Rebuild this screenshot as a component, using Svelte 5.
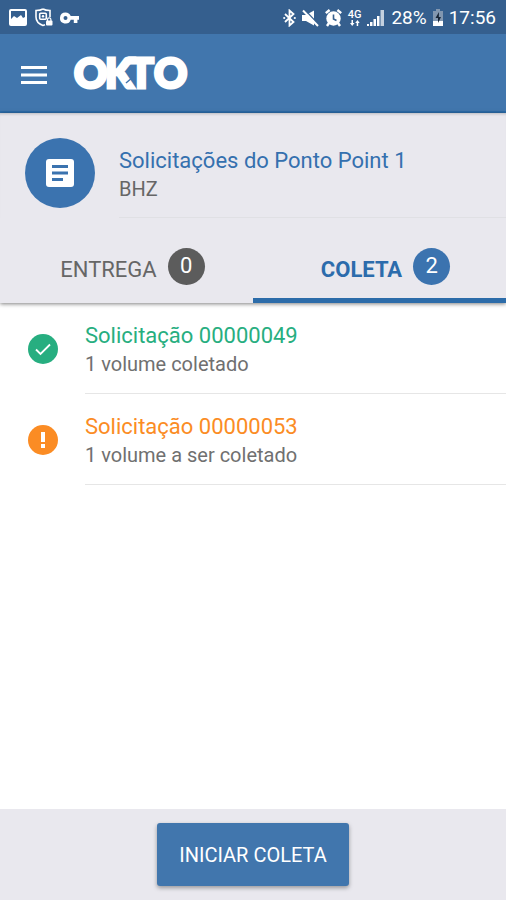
<script>
  let active = $state('coleta');

  const tabs = [
    { id: 'entrega', label: 'ENTREGA', count: 0 },
    { id: 'coleta', label: 'COLETA', count: 2 }
  ];

  const requests = [
    { title: 'Solicitação 00000049', detail: '1 volume coletado', status: 'done' },
    { title: 'Solicitação 00000053', detail: '1 volume a ser coletado', status: 'pending' }
  ];
</script>

<div class="screen">
  <div class="status">
    <div class="group left">
      <svg width="18" height="17" viewBox="0 0 18 17" aria-hidden="true">
        <path fill="#fff" fill-rule="evenodd" d="M2 0h14a2 2 0 0 1 2 2v13a2 2 0 0 1-2 2H2a2 2 0 0 1-2-2V2a2 2 0 0 1 2-2zM2 2v8l3-3 3 2 4-3 2 3 2-1V2z" />
      </svg>
      <svg width="19" height="19" viewBox="0 0 19 19" aria-hidden="true">
        <path fill="none" stroke="#fff" stroke-width="1.6" d="M9 1c2 1.200 4.500 1.500 7 1.500V9M9 1C7 2.200 4.500 2.500 2 2.500V9c0 4 3 7 7 8.500l2-.8" />
        <rect x="5.700" y="5.200" width="6.600" height="6" rx="1" fill="none" stroke="#fff" stroke-width="1.600" />
        <circle cx="9" cy="8.200" r="1.200" fill="#fff" />
        <rect x="12" y="12.500" width="6.500" height="5" rx="1" fill="#fff" />
        <path fill="none" stroke="#fff" stroke-width="1.200" d="M13.500 13v-1.500a1.700 1.700 0 0 1 3.400 0V13" />
      </svg>
      <svg width="19" height="12" viewBox="0 0 19 12" aria-hidden="true">
        <path fill="#fff" fill-rule="evenodd" d="M5.500.5a5.500 5.500 0 0 1 5.200 3.600H19v3.600h-1.600V11h-3.600V7.700h-3.100A5.500 5.500 0 1 1 5.500.5zm0 3.500a2 2 0 1 0 0 4 2 2 0 0 0 0-4z" />
      </svg>
    </div>
    <div class="group right">
      <svg width="13" height="18" viewBox="0 0 13 18" aria-hidden="true">
        <path fill="none" stroke="#fff" stroke-width="1.800" d="M2 5l8.500 8-4 3.500v-15l4 3.500L2 13" />
        <circle cx="1.200" cy="9" r="1.100" fill="#fff" /><circle cx="11.800" cy="9" r="1.100" fill="#fff" />
      </svg>
      <svg width="17" height="18" viewBox="0 0 17 18" aria-hidden="true">
        <path fill="#fff" d="M0 6h4l8-4.500v15L4 12H0z" />
        <path stroke="#355f8e" stroke-width="1.500" d="M2.500.5l14 15" />
        <path stroke="#fff" stroke-width="2" d="M1 1.500l15 15.500" />
      </svg>
      <svg width="17" height="18" viewBox="0 0 17 18" aria-hidden="true">
        <circle cx="8.500" cy="9.500" r="7.200" fill="#fff" />
        <path stroke="#fff" stroke-width="2.400" d="M.8 4.200L4.600 1M16.200 4.200L12.400 1M4 14l-2 3M13 14l2 3" />
        <path fill="none" stroke="#355f8e" stroke-width="1.600" d="M8.500 5.500V10l3 1.500" />
      </svg>
      <div class="net">
        <span>4G</span>
        <svg width="10" height="6" viewBox="0 0 10 6" aria-hidden="true">
          <path fill="#fff" d="M0 3h1.500V0h1.500v3h1.500L2.200 6zM5.200 3h1.500v3h1.500V3h1.500L7.500 0z" />
        </svg>
      </div>
      <svg width="18" height="18" viewBox="0 0 18 18" aria-hidden="true">
        <path fill="#fff" d="M0 15h2v2H0zM3 13h2.500v4H3zM6.500 10h2.500v7H6.500zM10 7h2.500v10H10z" />
        <path fill="#c3d0df" d="M13.500 1H17v16h-3.500z" />
      </svg>
      <span>28%</span>
      <svg width="10" height="18" viewBox="0 0 10 18" aria-hidden="true">
        <path fill="#8297b0" d="M3 0h4v2h3v10H0V2h3z" />
        <path fill="#fff" d="M0 12h10v5H0z" />
        <path fill="#172536" d="M6 3L2.500 9H5v5l3-6H5.800z" />
      </svg>
      <span>17:56</span>
    </div>
  </div>

  <header>
    <button class="menu" aria-label="Menu">
      <svg width="26" height="18" viewBox="0 0 26 18" aria-hidden="true">
        <path fill="#fff" d="M0 0h26v3H0zM0 7.500h26v3H0zM0 15h26v3H0z" />
      </svg>
    </button>
    <svg class="logo" width="116" height="60" viewBox="0 0 116 60" role="img" aria-label="OKTO">
      <text x="1 32 56 81" y="43">OKTO</text>
      <path stroke="#4176ad" stroke-width="1.500" d="M53 38l7-6" />
    </svg>
  </header>

  <section class="panel">
    <div class="place">
      <span class="avatar">
        <svg width="28" height="28" viewBox="0 0 28 28" aria-hidden="true">
          <rect width="28" height="28" rx="3" fill="#fff" />
          <path fill="#3b73af" d="M6 6h16v3H6zM6 12.500h16v3H6zM6 19h11v3H6z" />
        </svg>
      </span>
      <div class="info">
        <h1>Solicitações do Ponto Point 1</h1>
        <p>BHZ</p>
      </div>
    </div>
    <div class="tabs" role="tablist">
      {#each tabs as tab}
        <button
          role="tab"
          class="tab"
          class:active={active === tab.id}
          aria-selected={active === tab.id}
          onclick={() => (active = tab.id)}
        >
          <span class="label">{tab.label}</span>
          <span class="badge">{tab.count}</span>
        </button>
      {/each}
    </div>
  </section>

  <ul>
    {#each requests as request}
      <li class={request.status}>
        <svg width="30" height="30" viewBox="0 0 30 30" aria-hidden="true">
          <circle cx="15" cy="15" r="15" fill="currentColor" />
          {#if request.status === 'done'}
            <path fill="none" stroke="#fff" stroke-width="1.800" d="M8 15.500l4.500 4.500L22 10.500" />
          {:else}
            <path fill="#fff" d="M13 7h4v10h-4zM13 19h4v4h-4z" />
          {/if}
        </svg>
        <div class="text">
          <h2>{request.title}</h2>
          <p>{request.detail}</p>
        </div>
      </li>
    {/each}
  </ul>

  <footer>
    <button class="start">INICIAR COLETA</button>
  </footer>
</div>

<style>
  :global(body) {
    margin: 0;
  }

  .screen {
    display: flex;
    flex-direction: column;
    min-height: 100vh;
    background: #fff;
    color: #666;
    font-family: Roboto, "Liberation Sans", sans-serif;
  }

  button {
    border: 0;
    padding: 0;
    background: none;
    font: inherit;
    color: inherit;
    cursor: pointer;
  }

  h1,
  h2,
  p {
    margin: 0;
    font-weight: 400;
  }

  svg {
    display: block;
    flex: none;
  }

  .status {
    display: flex;
    justify-content: space-between;
    align-items: center;
    height: 34px;
    padding: 1px 10px 0 9px;
    box-sizing: border-box;
    background: #355f8e;
    color: #fff;
    font-size: 19px;
  }

  .group {
    display: flex;
    align-items: center;
  }

  .left {
    gap: 7px;
  }

  .right {
    gap: 6px;
  }

  .net {
    display: flex;
    flex-direction: column;
    align-items: center;
    font-size: 11px;
    line-height: 10px;
    font-weight: 500;
  }

  header {
    display: flex;
    align-items: center;
    gap: 26px;
    height: 79px;
    box-sizing: border-box;
    padding: 4px 21px 0;
    background: #4176ad;
    border-bottom: 2px solid #2c6ca9;
  }

  .logo text {
    fill: #fff;
    stroke: #fff;
    stroke-width: 3px;
    font-family: Lato, sans-serif;
    font-weight: 900;
    font-size: 41px;
  }

  .panel {
    background: #e9e8ee;
    box-shadow: 0 1px 4px rgba(0, 0, 0, 0.5);
  }

  .place {
    display: flex;
    gap: 24px;
    padding-left: 25px;
    box-shadow: inset 0 3px 3px -2px rgba(0, 0, 0, 0.2);
  }

  .avatar {
    display: flex;
    align-items: center;
    justify-content: center;
    flex: none;
    width: 70px;
    height: 70px;
    margin-top: 25px;
    border-radius: 50%;
    background: #3b73af;
  }

  .info {
    flex: 1;
    padding: 34px 0 14px;
    border-bottom: 1px solid #e0e0e4;
  }

  h1,
  h2 {
    font-size: 22px;
    line-height: 28px;
  }

  h1 {
    color: #3570ae;
  }

  p {
    font-size: 20px;
    line-height: 28px;
  }

  .tabs {
    display: flex;
  }

  .tab {
    display: flex;
    flex: 1;
    align-items: center;
    justify-content: center;
    gap: 11px;
    height: 85px;
    padding: 16px 0 0 12px;
    font-size: 22px;
    line-height: 26px;
    border-bottom: 5px solid transparent;
  }

  .tab.active {
    color: #2c6cac;
    border-color: #2c6ca9;
  }

  .active .label {
    font-weight: 700;
  }

  .label {
    padding-top: 8px;
  }

  .badge {
    width: 37px;
    height: 37px;
    border-radius: 50%;
    background: #5c5c5c;
    color: #fff;
    line-height: 35px;
  }

  .active .badge {
    background: #3b73af;
  }

  ul {
    flex: 1;
    margin: 0;
    padding: 0;
    list-style: none;
  }

  li {
    display: flex;
    align-items: center;
    gap: 27px;
    padding-left: 28px;
  }

  .text {
    flex: 1;
    padding: 19px 0 15px;
    border-bottom: 1px solid #e6e6e6;
  }

  .done {
    color: #27ae80;
  }

  .pending {
    color: #fb8c24;
  }

  .text p {
    color: #707070;
  }

  footer {
    display: flex;
    justify-content: center;
    padding: 14px 0;
    background: #e9e8ee;
  }

  .start {
    height: 63px;
    padding: 0 22px;
    border-radius: 3px;
    background: #4176ad;
    box-shadow: 0 2px 4px rgba(0, 0, 0, 0.35);
    color: #fff;
    font-size: 20px;
  }
</style>
